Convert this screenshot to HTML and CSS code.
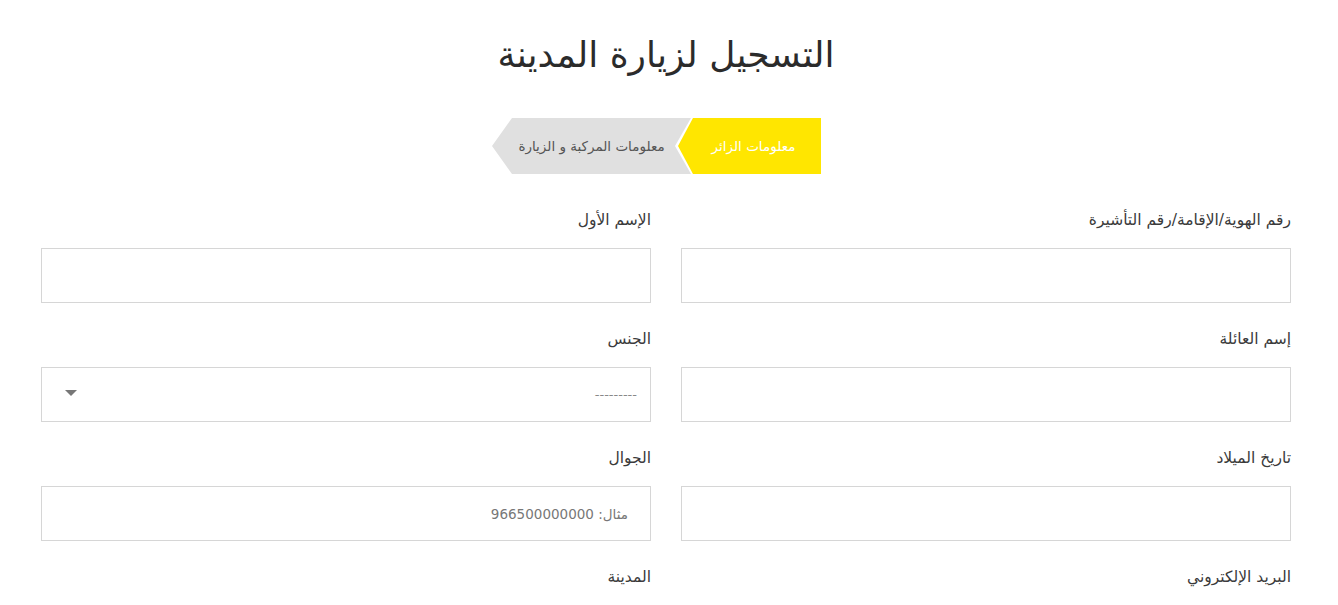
FILE: index.html
```html
<!DOCTYPE html>
<html lang="ar" dir="rtl">
<head>
    <meta charset="UTF-8">
    <meta name="viewport" content="width=device-width, initial-scale=1.0">
    <title>التسجيل لزيارة المدينة</title>
    <link rel="stylesheet" href="styles.css">
</head>
<body>
    <div class="page">
        <h1>التسجيل لزيارة المدينة</h1>

        <div class="steps">
            <div class="step step-active">معلومات الزائر</div>
            <div class="step step-next">معلومات المركبة و الزيارة</div>
        </div>

        <form class="form">
            <div class="field">
                <label>رقم الهوية/الإقامة/رقم التأشيرة</label>
                <input type="text" class="input">
            </div>
            <div class="field">
                <label>الإسم الأول</label>
                <input type="text" class="input">
            </div>
            <div class="field">
                <label>إسم العائلة</label>
                <input type="text" class="input">
            </div>
            <div class="field">
                <label>الجنس</label>
                <div class="select">
                    <span class="select-value">---------</span>
                    <span class="select-arrow"></span>
                </div>
            </div>
            <div class="field">
                <label>تاريخ الميلاد</label>
                <input type="text" class="input">
            </div>
            <div class="field">
                <label>الجوال</label>
                <input type="text" class="input" placeholder="مثال: 966500000000">
            </div>
            <div class="field">
                <label>البريد الإلكتروني</label>
                <input type="text" class="input">
            </div>
            <div class="field">
                <label>المدينة</label>
                <input type="text" class="input">
            </div>
        </form>
    </div>
</body>
</html>
```

FILE: styles.css
```css
body {
    font-family: "DejaVu Sans", "Noto Sans", sans-serif;
    margin: 0;
    padding: 0;
    background-color: #fff;
    color: #333;
}
.page {
    padding: 0 47px 0 41px;
}
h1 {
    margin: 0;
    padding-top: 35px;
    height: 118px;
    box-sizing: border-box;
    text-align: center;
    font-size: 36px;
    font-weight: normal;
    line-height: 40px;
    color: #2b2b2b;
}
.steps {
    display: flex;
    justify-content: center;
    padding-right: 19px;
    height: 56px;
}
.step {
    height: 56px;
    display: flex;
    align-items: center;
    justify-content: center;
    font-size: 13.5px;
}
.step-active {
    width: 143px;
    background-color: #ffe600;
    color: #fff;
    padding-left: 8px;
    box-sizing: border-box;
    clip-path: polygon(100% 0, 100% 100%, 15px 100%, 0 50%, 15px 0);
}
.step-next {
    width: 199px;
    margin-right: -13px;
    background-color: #e0e0e0;
    color: #555;
    clip-path: polygon(20px 0, 100% 0, calc(100% - 16px) 50%, 100% 100%, 20px 100%, 0 50%);
}
.form {
    display: grid;
    grid-template-columns: 1fr 1fr;
    column-gap: 30px;
    padding-top: 36px;
}
.field {
    display: flex;
    flex-direction: column;
    margin-bottom: 26px;
}
.field label {
    font-size: 15.5px;
    line-height: 20px;
    color: #3a3a3a;
    margin-bottom: 18px;
}
.input,
.select {
    height: 55px;
    box-sizing: border-box;
    border: 1px solid #d6d6d6;
    background: #fff;
    font-family: inherit;
    font-size: 13.5px;
    padding: 0 22px;
    color: #333;
    outline: none;
}
.input::placeholder {
    color: #777;
}
.select {
    display: flex;
    align-items: center;
    justify-content: space-between;
    padding-right: 13px;
}
.select-value {
    color: #888;
    font-size: 13px;
}
.select-arrow {
    width: 0;
    height: 0;
    border-left: 6px solid transparent;
    border-right: 6px solid transparent;
    border-top: 6px solid #777;
    margin-left: 1px;
    margin-top: -3px;
}
```
